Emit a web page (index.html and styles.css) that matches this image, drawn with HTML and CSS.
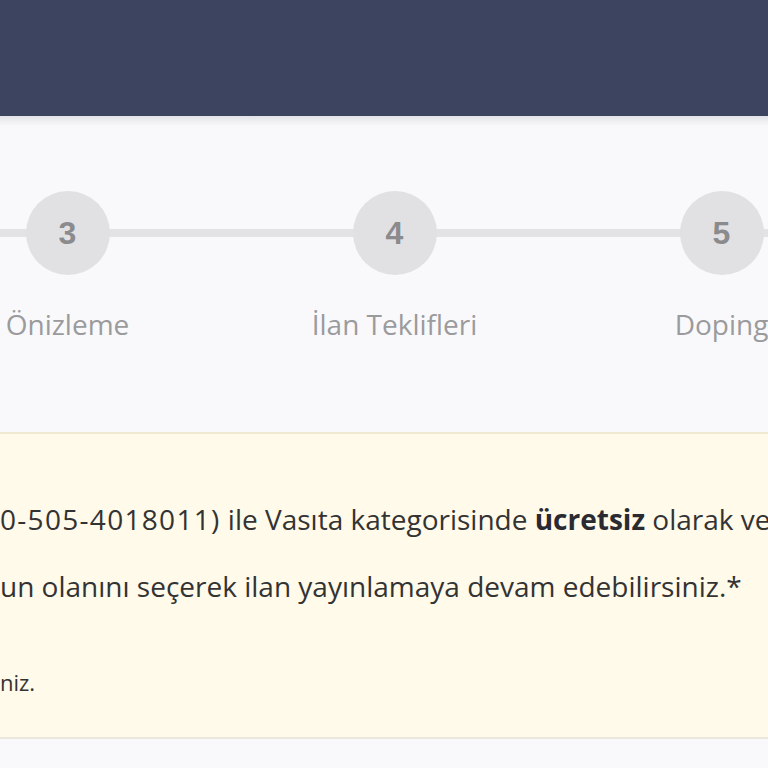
FILE: index.html
```html
<!DOCTYPE html>
<html lang="tr">
<head>
<meta charset="utf-8">
<title>İlan Ver</title>
<link rel="stylesheet" href="styles.css">
</head>
<body>
<header class="topbar"></header>
<main class="content">
  <section class="stepper">
    <div class="steps">
      <div class="step">
        <div class="circle">3</div>
        <div class="label">Önizleme</div>
      </div>
      <div class="step">
        <div class="circle">4</div>
        <div class="label">İlan Teklifleri</div>
      </div>
      <div class="step">
        <div class="circle">5</div>
        <div class="label">Doping</div>
      </div>
    </div>
  </section>
  <section class="notice">
    <p class="line"><span class="phone">0-505-4018011)</span> ile Vasıta kategorisinde <b>ücretsiz</b> olarak ve</p>
    <p class="line line-second">un olanını seçerek ilan yayınlamaya devam edebilirsiniz.*</p>
    <p class="small">niz.</p>
  </section>
</main>
</body>
</html>
```
FILE: styles.css
```css
html, body {
  margin: 0;
  padding: 0;
}
body {
  width: 768px;
  height: 768px;
  overflow: hidden;
  background: #f9f9fb;
  font-family: "Open Sans", "Noto Sans", "Liberation Sans", sans-serif;
}
.topbar {
  height: 116px;
  background: #3d445f;
}
.content {
  background: linear-gradient(#e2e3e8 0, #f9f9fb 10px);
  padding-top: 75px;
}
.stepper {
  overflow: hidden;
  position: relative;
  height: 241px;
}
.stepper::before {
  content: "";
  position: absolute;
  left: 0;
  right: 0;
  top: 38px;
  height: 8px;
  background: #e3e3e6;
}
.steps {
  display: flex;
  margin-left: -96px;
  position: relative;
}
.step {
  flex: 0 0 327px;
  display: flex;
  flex-direction: column;
  align-items: center;
}
.circle {
  width: 84px;
  height: 84px;
  border-radius: 50%;
  background: #e1e1e4;
  color: #8b8b8d;
  font-family: "Liberation Sans", Arial, sans-serif;
  font-weight: 700;
  font-size: 32px;
  display: flex;
  align-items: center;
  justify-content: center;
}
.label {
  margin-top: 30px;
  font-size: 28px;
  line-height: 38px;
  color: #9b9b9d;
  white-space: nowrap;
}
.notice {
  box-sizing: border-box;
  height: 307px;
  background: #fffaea;
  border-top: 2px solid #efe9d4;
  border-bottom: 2px solid #ebe7dc;
  padding-top: 67px;
  color: #333;
}
.line {
  margin: 0;
  font-size: 28px;
  line-height: 36px;
  white-space: nowrap;
}
.phone {
  letter-spacing: 1.3px;
}
.line-second {
  margin-top: 31px;
}
.line b {
  font-weight: 700;
  color: #2a2a30;
}
.small {
  margin: 64px 0 0 0;
  font-size: 22px;
  line-height: 28px;
  color: #333;
}
```
